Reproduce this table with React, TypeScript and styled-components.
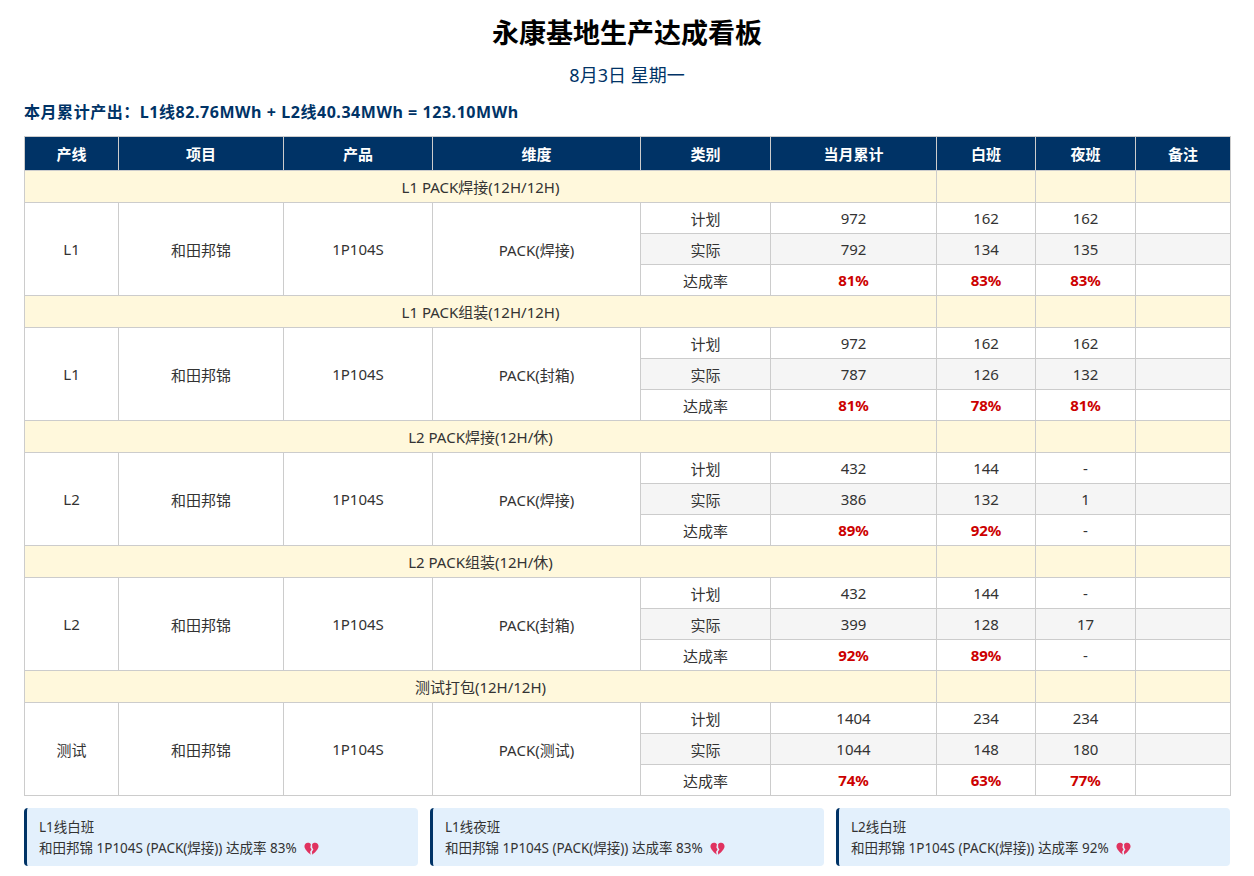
import React from "react";
import styled, { createGlobalStyle } from "styled-components";

const GlobalStyle = createGlobalStyle`
  html, body {
    margin: 0;
    padding: 0;
    background: #ffffff;
  }
  body {
    font-family: "Noto Sans", "Noto Sans CJK SC", sans-serif;
    color: #333333;
  }
`;

type Row = {
  label: string;
  month: string;
  day: string;
  night: string;
  rate?: boolean;
};

type Section = {
  title: string;
  line: string;
  dimension: string;
  rows: Row[];
};

const sections: Section[] = [
  {
    title: "L1 PACK焊接(12H/12H)",
    line: "L1",
    dimension: "PACK(焊接)",
    rows: [
      { label: "计划", month: "972", day: "162", night: "162" },
      { label: "实际", month: "792", day: "134", night: "135" },
      { label: "达成率", month: "81%", day: "83%", night: "83%", rate: true },
    ],
  },
  {
    title: "L1 PACK组装(12H/12H)",
    line: "L1",
    dimension: "PACK(封箱)",
    rows: [
      { label: "计划", month: "972", day: "162", night: "162" },
      { label: "实际", month: "787", day: "126", night: "132" },
      { label: "达成率", month: "81%", day: "78%", night: "81%", rate: true },
    ],
  },
  {
    title: "L2 PACK焊接(12H/休)",
    line: "L2",
    dimension: "PACK(焊接)",
    rows: [
      { label: "计划", month: "432", day: "144", night: "-" },
      { label: "实际", month: "386", day: "132", night: "1" },
      { label: "达成率", month: "89%", day: "92%", night: "-", rate: true },
    ],
  },
  {
    title: "L2 PACK组装(12H/休)",
    line: "L2",
    dimension: "PACK(封箱)",
    rows: [
      { label: "计划", month: "432", day: "144", night: "-" },
      { label: "实际", month: "399", day: "128", night: "17" },
      { label: "达成率", month: "92%", day: "89%", night: "-", rate: true },
    ],
  },
  {
    title: "测试打包(12H/12H)",
    line: "测试",
    dimension: "PACK(测试)",
    rows: [
      { label: "计划", month: "1404", day: "234", night: "234" },
      { label: "实际", month: "1044", day: "148", night: "180" },
      { label: "达成率", month: "74%", day: "63%", night: "77%", rate: true },
    ],
  },
];

const columns = [
  { name: "产线", width: 94 },
  { name: "项目", width: 165 },
  { name: "产品", width: 149 },
  { name: "维度", width: 208 },
  { name: "类别", width: 130 },
  { name: "当月累计", width: 166 },
  { name: "白班", width: 99 },
  { name: "夜班", width: 100 },
  { name: "备注", width: 95 },
];

const alerts = [
  { title: "L1线白班", text: "和田邦锦 1P104S (PACK(焊接)) 达成率 83%" },
  { title: "L1线夜班", text: "和田邦锦 1P104S (PACK(焊接)) 达成率 83%" },
  { title: "L2线白班", text: "和田邦锦 1P104S (PACK(焊接)) 达成率 92%" },
];

function BrokenHeart() {
  return (
    <HeartIcon viewBox="0 0 20 18" aria-hidden="true">
      <path
        d="M9.2 2.6C8 1.1 6.6.6 5.2.6 2.6.6.6 2.7.6 5.4c0 4.3 5 8.3 8.4 11.2L8.1 12.6l2-3.1-1.6-2.6z"
        fill="#e0325f"
      />
      <path
        d="M10.8 2.6C12 1.1 13.4.6 14.8.6c2.6 0 4.6 2.1 4.6 4.8 0 4.3-5 8.3-8.4 11.2l-.4-3.8 1.9-3.2-1.5-2.4z"
        fill="#e0325f"
      />
    </HeartIcon>
  );
}

function App() {
  return (
    <>
      <GlobalStyle />
      <Page>
        <Title>永康基地生产达成看板</Title>
        <DateLine>8月3日 星期一</DateLine>
        <Summary>本月累计产出：L1线82.76MWh + L2线40.34MWh = 123.10MWh</Summary>
        <Table>
          <colgroup>
            {columns.map((c) => (
              <col key={c.name} style={{ width: c.width }} />
            ))}
          </colgroup>
          <thead>
            <tr>
              {columns.map((c) => (
                <HeadCell key={c.name}>{c.name}</HeadCell>
              ))}
            </tr>
          </thead>
          <tbody>
            {sections.map((s) => (
              <React.Fragment key={s.title}>
                <SectionRow>
                  <Cell colSpan={6}>{s.title}</Cell>
                  <Cell />
                  <Cell />
                  <Cell />
                </SectionRow>
                {s.rows.map((r, i) => (
                  <DataRow key={r.label} $alt={i === 1}>
                    {i === 0 && (
                      <>
                        <SpanCell rowSpan={3}>{s.line}</SpanCell>
                        <SpanCell rowSpan={3}>和田邦锦</SpanCell>
                        <SpanCell rowSpan={3}>1P104S</SpanCell>
                        <SpanCell rowSpan={3}>{s.dimension}</SpanCell>
                      </>
                    )}
                    <Cell>{r.label}</Cell>
                    <Cell $rate={r.rate && r.month !== "-"}>{r.month}</Cell>
                    <Cell $rate={r.rate && r.day !== "-"}>{r.day}</Cell>
                    <Cell $rate={r.rate && r.night !== "-"}>{r.night}</Cell>
                    <Cell />
                  </DataRow>
                ))}
              </React.Fragment>
            ))}
          </tbody>
        </Table>
        <AlertGrid>
          {alerts.map((a) => (
            <AlertCard key={a.title}>
              <AlertLine>{a.title}</AlertLine>
              <AlertLine>
                {a.text} <BrokenHeart />
              </AlertLine>
            </AlertCard>
          ))}
        </AlertGrid>
      </Page>
    </>
  );
}

const Page = styled.div`
  padding: 14px 24px 10px;
`;

const Title = styled.h1`
  margin: 0;
  text-align: center;
  font-size: 27px;
  line-height: 38px;
  font-weight: 700;
  color: #000000;
`;

const DateLine = styled.div`
  margin-top: 11px;
  text-align: center;
  font-size: 18px;
  line-height: 24px;
  color: #003366;
`;

const Summary = styled.div`
  margin-top: 14px;
  font-size: 16px;
  line-height: 22px;
  font-weight: 700;
  letter-spacing: 0.55px;
  color: #003366;
`;

const Table = styled.table`
  margin-top: 13px;
  width: 100%;
  border-collapse: collapse;
  table-layout: fixed;
  font-size: 15px;
`;

const HeadCell = styled.th`
  height: 33px;
  padding: 0;
  background: #003366;
  color: #ffffff;
  font-weight: 700;
  font-size: 15px;
  border: 1px solid #cccccc;
  text-align: center;
`;

const Cell = styled.td<{ $rate?: boolean }>`
  padding: 0;
  border: 1px solid #cccccc;
  text-align: center;
  color: ${(p) => (p.$rate ? "#cc0000" : "#333333")};
  font-weight: ${(p) => (p.$rate ? 700 : 400)};
`;

const SpanCell = styled(Cell)`
  background: #ffffff;
`;

const SectionRow = styled.tr`
  height: 32px;
  background: #fff8dc;
`;

const DataRow = styled.tr<{ $alt?: boolean }>`
  height: 31px;
  background: ${(p) => (p.$alt ? "#f5f5f5" : "#ffffff")};
`;

const AlertGrid = styled.div`
  margin-top: 12px;
  display: grid;
  grid-template-columns: repeat(3, 1fr);
  gap: 12px;
`;

const AlertCard = styled.div`
  background: #e3f0fc;
  border-left: 3px solid #003366;
  border-radius: 4px;
  padding: 9px 12px 7px;
`;

const AlertLine = styled.div`
  font-size: 13.5px;
  line-height: 21px;
  color: #333333;
  display: flex;
  align-items: center;
  gap: 4px;
`;

const HeartIcon = styled.svg`
  width: 15px;
  height: 14px;
  margin-left: 3px;
`;

export default App;
